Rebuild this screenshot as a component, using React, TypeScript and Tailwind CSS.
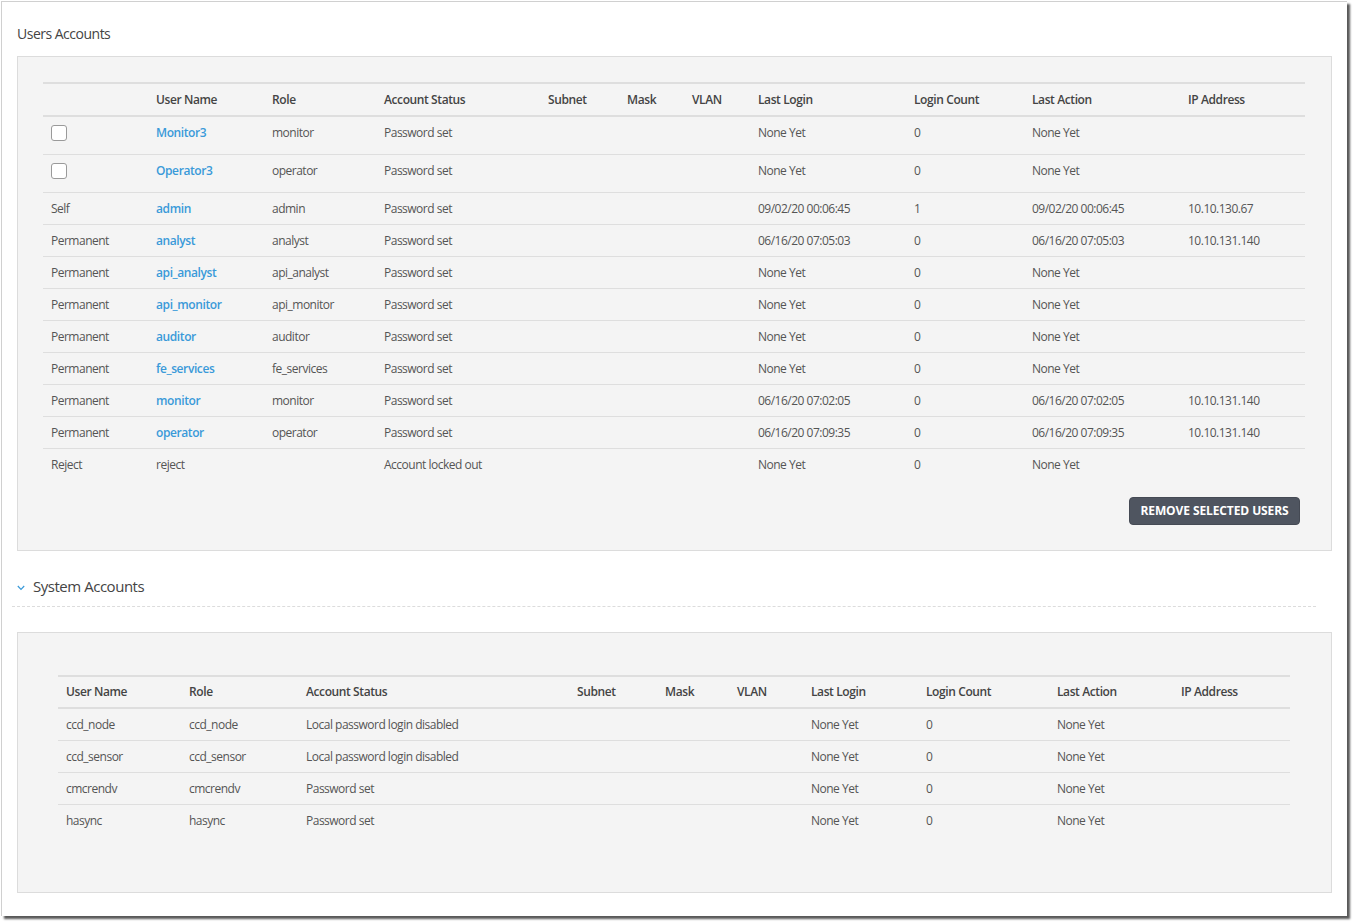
import React from "react";

const c1 = "grid grid-cols-[105px_116px_112px_164px_79px_65px_66px_156px_118px_156px_125px]";
const c2 = "grid grid-cols-[123px_117px_271px_88px_72px_74px_115px_131px_124px_117px]";

type U = { kind: string; check?: boolean; name: string; link: boolean; role: string; status: string; last: string; count: string; action: string; ip: string };

const users: U[] = [
  { kind: "", check: true, name: "Monitor3", link: true, role: "monitor", status: "Password set", last: "None Yet", count: "0", action: "None Yet", ip: "" },
  { kind: "", check: true, name: "Operator3", link: true, role: "operator", status: "Password set", last: "None Yet", count: "0", action: "None Yet", ip: "" },
  { kind: "Self", name: "admin", link: true, role: "admin", status: "Password set", last: "09/02/20 00:06:45", count: "1", action: "09/02/20 00:06:45", ip: "10.10.130.67" },
  { kind: "Permanent", name: "analyst", link: true, role: "analyst", status: "Password set", last: "06/16/20 07:05:03", count: "0", action: "06/16/20 07:05:03", ip: "10.10.131.140" },
  { kind: "Permanent", name: "api_analyst", link: true, role: "api_analyst", status: "Password set", last: "None Yet", count: "0", action: "None Yet", ip: "" },
  { kind: "Permanent", name: "api_monitor", link: true, role: "api_monitor", status: "Password set", last: "None Yet", count: "0", action: "None Yet", ip: "" },
  { kind: "Permanent", name: "auditor", link: true, role: "auditor", status: "Password set", last: "None Yet", count: "0", action: "None Yet", ip: "" },
  { kind: "Permanent", name: "fe_services", link: true, role: "fe_services", status: "Password set", last: "None Yet", count: "0", action: "None Yet", ip: "" },
  { kind: "Permanent", name: "monitor", link: true, role: "monitor", status: "Password set", last: "06/16/20 07:02:05", count: "0", action: "06/16/20 07:02:05", ip: "10.10.131.140" },
  { kind: "Permanent", name: "operator", link: true, role: "operator", status: "Password set", last: "06/16/20 07:09:35", count: "0", action: "06/16/20 07:09:35", ip: "10.10.131.140" },
  { kind: "Reject", name: "reject", link: false, role: "", status: "Account locked out", last: "None Yet", count: "0", action: "None Yet", ip: "" },
];

const sys = [
  ["ccd_node", "ccd_node", "Local password login disabled"],
  ["ccd_sensor", "ccd_sensor", "Local password login disabled"],
  ["cmcrendv", "cmcrendv", "Password set"],
  ["hasync", "hasync", "Password set"],
];

const cell = "pl-2 leading-4 whitespace-nowrap";

export default function App() {
  return (
    <div className="w-[1356px] h-[923px] bg-white relative" style={{ fontFamily: "'Open Sans', 'Noto Sans', sans-serif" }}>
      <div className="absolute left-[1px] top-[1px] w-[1346px] h-[915px] bg-white border-l border-t border-[#d0d0d0] shadow-[3px_3px_2px_rgba(60,60,60,0.85)]">
        <div className="pt-[22px] pl-[15px] text-[14px] leading-5 text-[#444] tracking-[-0.5px]">Users Accounts</div>
        <div className="mt-[12px] ml-[15px] w-[1315px] bg-[#f4f4f4] border border-[#dcdcdc] pt-[25px] pl-[25px] pr-[25px] pb-[25px]">
          <div className="w-[1262px] text-[12px] text-[#555] tracking-[-0.5px]">
            <div className={`${c1} h-[35px] border-t-2 border-b-2 border-[#dedede] pt-[8px] font-semibold text-[#444] tracking-[-0.4px]`}>
              <div className={cell}></div>
              <div className={cell}>User Name</div>
              <div className={cell}>Role</div>
              <div className={cell}>Account Status</div>
              <div className={cell}>Subnet</div>
              <div className={cell}>Mask</div>
              <div className={cell}>VLAN</div>
              <div className={cell}>Last Login</div>
              <div className={cell}>Login Count</div>
              <div className={cell}>Last Action</div>
              <div className={cell}>IP Address</div>
            </div>
            {users.map((u, i) => (
              <div
                key={i}
                className={`${c1} ${u.check ? "h-[38px]" : "h-[32px]"} ${i < users.length - 1 ? "border-b border-[#dedede]" : ""} pt-[8px] items-start`}
              >
                <div className={cell}>
                  {u.check ? (
                    <div className="w-[16px] h-[16px] rounded-[3px] border border-[#9a9a9a] bg-white" />
                  ) : (
                    u.kind
                  )}
                </div>
                <div className={`${cell} ${u.link ? "text-[#3a9ad9] font-semibold tracking-[-0.4px]" : ""}`}>{u.name}</div>
                <div className={cell}>{u.role}</div>
                <div className={cell}>{u.status}</div>
                <div className={cell}></div>
                <div className={cell}></div>
                <div className={cell}></div>
                <div className={cell}>{u.last}</div>
                <div className={cell}>{u.count}</div>
                <div className={cell}>{u.action}</div>
                <div className={cell}>{u.ip}</div>
              </div>
            ))}
            <div className="flex justify-end pr-[5px] mt-[16px]">
              <button className="w-[171px] h-[28px] rounded-[4px] bg-[#4f5560] border border-[#454a54] text-white text-[12px] font-bold tracking-[-0.1px]">
                REMOVE SELECTED USERS
              </button>
            </div>
          </div>
        </div>

        <div className="mt-[24px] ml-[10px] w-[1304px] flex items-center h-[22px] box-content pb-[9px] border-b border-dashed border-[#dcdcdc]">
          <svg width="8" height="6" viewBox="0 0 8 6" className="ml-[5px] mt-[4px]">
            <polyline points="0.8,1 4,4.4 7.2,1" fill="none" stroke="#3a9ad9" strokeWidth="1.2" />
          </svg>
          <span className="ml-[8px] text-[15px] leading-[22px] text-[#444] tracking-[-0.47px]">System Accounts</span>
        </div>

        <div className="mt-[25px] ml-[15px] w-[1315px] bg-[#f4f4f4] border border-[#dcdcdc] pt-[42px] pl-[40px] pr-[40px] pb-[55px]">
          <div className="w-[1232px] text-[12px] text-[#555] tracking-[-0.5px]">
            <div className={`${c2} h-[34px] border-t-2 border-b-2 border-[#dedede] pt-[7px] font-semibold text-[#444] tracking-[-0.4px]`}>
              <div className={cell}>User Name</div>
              <div className={cell}>Role</div>
              <div className={cell}>Account Status</div>
              <div className={cell}>Subnet</div>
              <div className={cell}>Mask</div>
              <div className={cell}>VLAN</div>
              <div className={cell}>Last Login</div>
              <div className={cell}>Login Count</div>
              <div className={cell}>Last Action</div>
              <div className={cell}>IP Address</div>
            </div>
            {sys.map((r, i) => (
              <div key={i} className={`${c2} h-[32px] ${i < sys.length - 1 ? "border-b border-[#dedede]" : ""} pt-[8px] items-start`}>
                <div className={cell}>{r[0]}</div>
                <div className={cell}>{r[1]}</div>
                <div className={cell}>{r[2]}</div>
                <div className={cell}></div>
                <div className={cell}></div>
                <div className={cell}></div>
                <div className={cell}>None Yet</div>
                <div className={cell}>0</div>
                <div className={cell}>None Yet</div>
                <div className={cell}></div>
              </div>
            ))}
          </div>
        </div>
      </div>
    </div>
  );
}
